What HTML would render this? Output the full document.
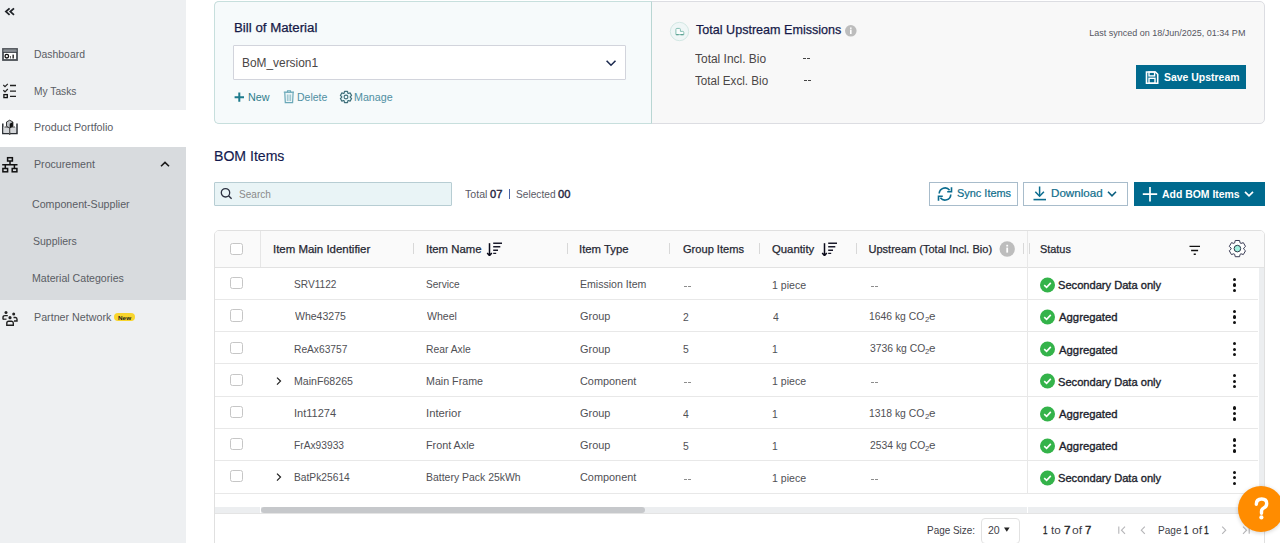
<!DOCTYPE html>
<html><head><meta charset="utf-8"><style>
html,body{margin:0;padding:0;width:1280px;height:543px;overflow:hidden;background:#fff;font-family:"Liberation Sans",sans-serif}
.t{position:absolute;white-space:nowrap;transform-origin:0 0}
.b{position:absolute;display:block}
</style></head><body>
<div class="b" style="left:0px;top:0px;width:186px;height:543px;background:#eef0f2"></div>
<div class="b" style="left:0px;top:110px;width:186px;height:37px;background:#ffffff"></div>
<div class="b" style="left:0px;top:147px;width:186px;height:153px;background:#d8dbde"></div>
<svg class="b" style="left:3px;top:5px;" width="14" height="13" viewBox="0 0 14 13"><path d="M6.6 3.3 L2.9 6.6 L6.6 9.9 M11 3.3 L7.3 6.6 L11 9.9" fill="none" stroke="#1f2328" stroke-width="1.8"/></svg>
<div class="t" style="left:34.17px;top:48.72px;font-size:11.5px;line-height:11.5px;color:#5a5d64;transform:scaleX(0.9062);">Dashboard</div>
<div class="t" style="left:34.18px;top:85.52px;font-size:11.5px;line-height:11.5px;color:#5a5d64;transform:scaleX(0.8900);">My Tasks</div>
<div class="t" style="left:34.14px;top:122.02px;font-size:11.5px;line-height:11.5px;color:#5a5d64;transform:scaleX(0.9330);">Product Portfolio</div>
<div class="t" style="left:33.85px;top:159.12px;font-size:11.5px;line-height:11.5px;color:#5a5d64;transform:scaleX(0.9251);">Procurement</div>
<div class="t" style="left:32.47px;top:199.32px;font-size:11.5px;line-height:11.5px;color:#5a5d64;transform:scaleX(0.9259);">Component-Supplier</div>
<div class="t" style="left:32.53px;top:236.32px;font-size:11.5px;line-height:11.5px;color:#5a5d64;transform:scaleX(0.9142);">Suppliers</div>
<div class="t" style="left:32.15px;top:273.12px;font-size:11.5px;line-height:11.5px;color:#5a5d64;transform:scaleX(0.9209);">Material Categories</div>
<div class="t" style="left:33.64px;top:312.22px;font-size:11.5px;line-height:11.5px;color:#5a5d64;transform:scaleX(0.9316);">Partner Network</div>
<div class="b" style="left:114px;top:313px;width:21px;height:8.2px;background:#f8d52d;border-radius:4.1px"></div>
<div class="t" style="left:117.79px;top:314.77px;font-size:6px;line-height:6px;font-weight:bold;color:#1a1a1a;transform:scaleX(1.0610);">New</div>
<svg class="b" style="left:0px;top:46px;" width="20" height="16" viewBox="0 0 20 16"><rect x="3" y="3" width="14" height="11" fill="#fff" stroke="#4a4f55" stroke-width="1.8"/><rect x="3.5" y="3.5" width="13" height="2.5" fill="#8a8f95"/><line x1="3" y1="6.4" x2="17" y2="6.4" stroke="#3a3f45" stroke-width="1"/><circle cx="6.8" cy="10.2" r="1.8" fill="none" stroke="#111" stroke-width="1.3"/><rect x="10" y="10" width="1" height="2.5" fill="#666"/><rect x="12.5" y="8.6" width="1.3" height="3.9" fill="#111"/></svg>
<svg class="b" style="left:0px;top:80px;" width="20" height="20" viewBox="0 0 20 20"><path d="M3.3 5 L5 6.6 L7.8 3.8 M3.3 10.2 L5 11.8 L7.8 9" fill="none" stroke="#222" stroke-width="1.2"/><rect x="3.9" y="14.6" width="3.4" height="3" fill="none" stroke="#111" stroke-width="1.3"/><path d="M10 5.5 H16 M10 11.2 H16 M10 16.4 H16" stroke="#222" stroke-width="1.3"/></svg>
<svg class="b" style="left:0px;top:118px;" width="20" height="18" viewBox="0 0 20 18"><path d="M2.8 5.5 V15.5 H17 V5.5" fill="none" stroke="#2a2e33" stroke-width="1.5"/><rect x="3.5" y="9" width="5.5" height="6" fill="#d4d6d9"/><rect x="10.5" y="9" width="5.5" height="6" fill="#d4d6d9"/><path d="M4.5 9 H8 M11.5 9 H15" stroke="#444" stroke-width="1"/><path d="M9.7 9.5 V17" stroke="#555" stroke-width="1.3"/><path d="M6.5 4 L9.7 2.2 L12.9 4 V8.3 L9.7 10 L6.5 8.3 Z" fill="#bfc3c7" stroke="#333" stroke-width="1"/><path d="M9.7 5.8 L12.9 4 V8.3 L9.7 10 Z" fill="#111"/></svg>
<svg class="b" style="left:0px;top:155px;" width="20" height="20" viewBox="0 0 20 20"><rect x="7.6" y="2.7" width="4.8" height="3.3" fill="none" stroke="#111" stroke-width="1.5"/><path d="M10 6 V9.7 M2.2 9.7 H17.5 M5.3 9.7 V13.3 M14.4 9.7 V13.3" stroke="#111" stroke-width="1.5"/><rect x="2.9" y="13.5" width="4.7" height="3.3" fill="none" stroke="#111" stroke-width="1.5"/><rect x="12.2" y="13.5" width="4.7" height="3.3" fill="none" stroke="#111" stroke-width="1.5"/></svg>
<svg class="b" style="left:158px;top:159px;" width="14" height="10" viewBox="0 0 14 10"><path d="M3 7.3 L7 3.4 L11 7.3" fill="none" stroke="#1a1a1a" stroke-width="1.6"/></svg>
<svg class="b" style="left:0px;top:308px;" width="20" height="20" viewBox="0 0 20 20"><circle cx="6" cy="4.4" r="1.5" fill="#222"/><path d="M3 11.5 V9.5 Q3 7.6 5 7.6 H7.8" fill="none" stroke="#222" stroke-width="1.4"/><path d="M3 11.2 H6.5" stroke="#222" stroke-width="1.2"/><circle cx="13.7" cy="6" r="1.5" fill="#222"/><path d="M13.5 9.5 H15.5 Q17 9.5 17 11.3 V13 H14" fill="none" stroke="#222" stroke-width="1.4"/><circle cx="10" cy="9.7" r="1.6" fill="#222"/><path d="M6.8 17.2 V15 Q6.8 13.2 8.6 13.2 H11.6 Q13.3 13.2 13.3 15 V17.2 Z" fill="none" stroke="#222" stroke-width="1.4"/></svg>
<div class="b" style="left:214px;top:1px;width:1051px;height:123px;box-sizing:border-box;border:1px solid #dcdde2;border-radius:5px;background:#f8f8f8"></div>
<div class="b" style="left:214px;top:1px;width:438px;height:123px;box-sizing:border-box;border:1px solid #c7dfdd;border-right:1px solid #b9d6d3;border-radius:5px 0 0 5px;background:#f6fafb"></div>
<div class="t" style="left:233.54px;top:21.77px;font-size:12.5px;line-height:12.5px;color:#161a48;transform:scaleX(1.0619);-webkit-text-stroke:0.25px #161a48;">Bill of Material</div>
<div class="b" style="left:233px;top:45px;width:393px;height:34.5px;box-sizing:border-box;border:1px solid #d2d4dc;background:#fff;border-radius:1px"></div>
<div class="t" style="left:241.65px;top:56.99px;font-size:12px;line-height:12px;color:#4a4646;transform:scaleX(0.9910);">BoM_version1</div>
<svg class="b" style="left:603px;top:57px;" width="16" height="12" viewBox="0 0 16 12"><path d="M3.6 3.8 L8 8.2 L12.5 3.8" fill="none" stroke="#1c2a4f" stroke-width="1.6"/></svg>
<svg class="b" style="left:232px;top:90px;" width="14" height="14" viewBox="0 0 14 14"><path d="M7.3 2.5 V11.8 M2.6 7.2 H12" stroke="#1d7a8c" stroke-width="2"/></svg>
<div class="t" style="left:248.14px;top:92.16px;font-size:10.5px;line-height:10.5px;color:#2e7d8c;transform:scaleX(1.0241);">New</div>
<svg class="b" style="left:281px;top:88px;" width="14" height="17" viewBox="0 0 14 17"><path d="M2.8 4.2 H13" stroke="#6aa8b8" stroke-width="1.4"/><path d="M6.5 4 V2.8 H9.5 V4" fill="none" stroke="#6aa8b8" stroke-width="1.1"/><path d="M3.8 5 L4.3 14.6 H11.6 L12.1 5" fill="#eef6f8" stroke="#6aa8b8" stroke-width="1.2"/><path d="M6.4 6.5 V13 M8 6.5 V13 M9.6 6.5 V13" stroke="#8dbdc8" stroke-width="0.9"/></svg>
<div class="t" style="left:296.96px;top:92.16px;font-size:10.5px;line-height:10.5px;color:#4f8fa2;">Delete</div>
<svg class="b" style="left:338px;top:89px;" width="16" height="16" viewBox="0 0 16 16"><path d="M6.15 4.12 L6.50 2.40 L9.50 2.40 L9.85 4.12 L10.44 4.46 L12.10 3.90 L13.60 6.50 L12.29 7.66 L12.29 8.34 L13.60 9.50 L12.10 12.10 L10.44 11.54 L9.85 11.88 L9.50 13.60 L6.50 13.60 L6.15 11.88 L5.56 11.54 L3.90 12.10 L2.40 9.50 L3.71 8.34 L3.71 7.66 L2.40 6.50 L3.90 3.90 L5.56 4.46 Z" fill="#e6f6f8" stroke="#3f6f7a" stroke-width="1.2" stroke-linejoin="round"/><circle cx="8" cy="8" r="1.9" fill="#f6fafb" stroke="#3f6f7a" stroke-width="1.1"/></svg>
<div class="t" style="left:354.14px;top:92.16px;font-size:10.5px;line-height:10.5px;color:#4f8fa2;transform:scaleX(1.0191);">Manage</div>
<svg class="b" style="left:669px;top:21px;" width="21" height="21" viewBox="0 0 21 21"><circle cx="10.5" cy="10.5" r="9.2" fill="#eff6f6" stroke="#d3e8e4" stroke-width="1"/><path d="M7.9 7.4 H10.4 Q11.4 7.4 11.4 8.4 V10.4 H13.8 Q14.8 10.4 14.8 11.4 V13.6 H6.9 V8.4 Q6.9 7.4 7.9 7.4 Z" fill="#fbfdfd" stroke="#86bfb3" stroke-width="1"/><path d="M7.2 13.7 H9.6 M11.6 13.7 H14.5" stroke="#5fa395" stroke-width="1.3"/></svg>
<div class="t" style="left:695.55px;top:23.51px;font-size:12.8px;line-height:12.8px;color:#161a48;transform:scaleX(0.9826);-webkit-text-stroke:0.25px #161a48;">Total Upstream Emissions</div>
<svg class="b" style="left:843px;top:23px;" width="16" height="16" viewBox="0 0 16 16"><circle cx="7.8" cy="7.8" r="5.8" fill="#bdbdbd"/><rect x="7" y="6.6" width="1.6" height="4.4" fill="#fff"/><rect x="7" y="4.5" width="1.6" height="1.4" fill="#fff"/></svg>
<div class="t" style="left:695.36px;top:52.97px;font-size:12.5px;line-height:12.5px;color:#4a4646;transform:scaleX(0.9570);">Total Incl. Bio</div>
<div class="t" style="left:695.37px;top:74.77px;font-size:12.5px;line-height:12.5px;color:#4a4646;transform:scaleX(0.9312);">Total Excl. Bio</div>
<div class="b" style="left:802.6px;top:58.2px;width:3.6px;height:1.2px;background:#444"></div>
<div class="b" style="left:806.8px;top:58.2px;width:3.6px;height:1.2px;background:#444"></div>
<div class="b" style="left:803.7px;top:79.8px;width:3.4px;height:1.2px;background:#444"></div>
<div class="b" style="left:807.6px;top:79.8px;width:3.4px;height:1.2px;background:#444"></div>
<div class="t" style="left:1089.28px;top:29.23px;font-size:9px;line-height:9px;color:#55555f;">Last synced on 18/Jun/2025, 01:34 PM</div>
<div class="b" style="left:1136px;top:65px;width:110px;height:24px;background:#006a8e"></div>
<svg class="b" style="left:1144px;top:70px;" width="16" height="16" viewBox="0 0 16 16"><path d="M2.5 2 H11.4 L13.7 4.3 V13.2 H2.5 Z" fill="none" stroke="#fff" stroke-width="1.6"/><rect x="5" y="2" width="5.6" height="3.9" fill="none" stroke="#fff" stroke-width="1.4"/><rect x="5" y="8.3" width="6" height="4.9" fill="none" stroke="#fff" stroke-width="1.4"/></svg>
<div class="t" style="left:1163.74px;top:72.22px;font-size:11.5px;line-height:11.5px;font-weight:bold;color:#ffffff;transform:scaleX(0.9085);">Save Upstream</div>
<div class="t" style="left:214.47px;top:149.35px;font-size:14.3px;line-height:14.3px;color:#141a4e;transform:scaleX(0.9849);-webkit-text-stroke:0.15px #141a4e;">BOM Items</div>
<div class="b" style="left:214px;top:182px;width:238px;height:24px;box-sizing:border-box;border:1px solid #b7cdd3;background:#e9f4f6;border-radius:1px"></div>
<svg class="b" style="left:218px;top:185px;" width="16" height="16" viewBox="0 0 16 16"><circle cx="7.5" cy="7.8" r="4.2" fill="none" stroke="#2c3040" stroke-width="1.3"/><path d="M10.5 10.8 L13.6 13.8" stroke="#2c3040" stroke-width="1.4"/></svg>
<div class="t" style="left:239.35px;top:189.14px;font-size:11px;line-height:11px;color:#8a8a8a;transform:scaleX(0.9150);">Search</div>
<div class="t" style="left:465.19px;top:188.69px;font-size:11px;line-height:11px;color:#5a5a66;transform:scaleX(0.9628);">Total</div>
<div class="t" style="left:490.01px;top:188.69px;font-size:11px;line-height:11px;color:#1f2440;transform:scaleX(1.0150);-webkit-text-stroke:0.4px #1f2440;">07</div>
<div class="b" style="left:509px;top:189px;width:1px;height:10px;background:#4a64a8"></div>
<div class="t" style="left:516.04px;top:188.69px;font-size:11px;line-height:11px;color:#5a5a66;transform:scaleX(0.9247);">Selected</div>
<div class="t" style="left:558.41px;top:188.69px;font-size:11px;line-height:11px;color:#1f2440;transform:scaleX(1.0140);-webkit-text-stroke:0.4px #1f2440;">00</div>
<div class="b" style="left:929px;top:181.5px;width:89px;height:24.5px;box-sizing:border-box;border:1px solid #a8bccb;background:#fff"></div>
<svg class="b" style="left:935px;top:184px;" width="20" height="20" viewBox="0 0 20 20"><path d="M4.2 9.5 A5.8 5.8 0 0 1 14.6 6.2" fill="none" stroke="#0b6c8f" stroke-width="1.6"/><path d="M16.5 3.2 V7.7 H12.2" fill="none" stroke="#0b6c8f" stroke-width="1.6"/><path d="M15.8 10.5 A5.8 5.8 0 0 1 5.4 13.8" fill="none" stroke="#0b6c8f" stroke-width="1.6"/><path d="M3.5 16.8 V12.3 H7.8" fill="none" stroke="#0b6c8f" stroke-width="1.6"/></svg>
<div class="t" style="left:956.51px;top:188.34px;font-size:11px;line-height:11px;color:#0f6e8c;transform:scaleX(0.9941);-webkit-text-stroke:0.2px #0f6e8c;">Sync Items</div>
<div class="b" style="left:1023px;top:181.5px;width:105px;height:24.5px;box-sizing:border-box;border:1px solid #a8bccb;background:#fff"></div>
<svg class="b" style="left:1030px;top:183px;" width="20" height="20" viewBox="0 0 20 20"><path d="M9.6 3.5 V13" stroke="#0b6c8f" stroke-width="1.5"/><path d="M5.3 8.8 L9.6 13.2 L13.9 8.8" fill="none" stroke="#0b6c8f" stroke-width="1.5"/><path d="M3.5 16.6 H16" stroke="#0b6c8f" stroke-width="1.6"/></svg>
<div class="t" style="left:1051.37px;top:188.34px;font-size:11px;line-height:11px;color:#0f6e8c;transform:scaleX(1.0559);-webkit-text-stroke:0.2px #0f6e8c;">Download</div>
<svg class="b" style="left:1105px;top:188px;" width="14" height="12" viewBox="0 0 14 12"><path d="M3 3.8 L7 7.8 L11 3.8" fill="none" stroke="#0b5f80" stroke-width="1.6"/></svg>
<div class="b" style="left:1134px;top:182px;width:131px;height:24px;background:#006a8e"></div>
<svg class="b" style="left:1140px;top:185px;" width="20" height="20" viewBox="0 0 20 20"><path d="M10 2 V16.5 M2.8 9.2 H17.2" stroke="#fff" stroke-width="1.7"/></svg>
<div class="t" style="left:1162.24px;top:188.84px;font-size:11px;line-height:11px;font-weight:bold;color:#ffffff;transform:scaleX(0.9479);">Add BOM Items</div>
<svg class="b" style="left:1242px;top:188px;" width="14" height="12" viewBox="0 0 14 12"><path d="M3 3.8 L7 7.8 L11 3.8" fill="none" stroke="#fff" stroke-width="1.7"/></svg>
<div class="b" style="left:214px;top:230px;width:1051px;height:330px;box-sizing:border-box;border:1px solid #e0e0e0;border-radius:5px;background:#fff"></div>
<div class="b" style="left:215px;top:231px;width:1049px;height:36.5px;background:#fafafa;border-radius:4px 4px 0 0"></div>
<div class="b" style="left:215px;top:267px;width:1049px;height:1px;background:#e2e2e2"></div>
<div class="b" style="left:260px;top:231px;width:1px;height:36px;background:#e6e6e6"></div>
<div class="b" style="left:1027px;top:231px;width:1px;height:262px;background:#e8e8e8"></div>
<div class="b" style="left:413px;top:243px;width:1px;height:11px;background:#d8d8d8"></div>
<div class="b" style="left:567px;top:243px;width:1px;height:11px;background:#d8d8d8"></div>
<div class="b" style="left:669px;top:243px;width:1px;height:11px;background:#d8d8d8"></div>
<div class="b" style="left:759px;top:243px;width:1px;height:11px;background:#d8d8d8"></div>
<div class="b" style="left:856px;top:243px;width:1px;height:11px;background:#d8d8d8"></div>
<div class="b" style="left:1023px;top:243px;width:1px;height:11px;background:#d8d8d8"></div>
<div class="b" style="left:1029px;top:243px;width:1px;height:11px;background:#d8d8d8"></div>
<div class="b" style="left:230px;top:243.1px;width:12.6px;height:12.2px;box-sizing:border-box;border:1px solid #c6c6c6;border-radius:2.5px;background:#fff"></div>
<div class="t" style="left:272.57px;top:244.44px;font-size:11px;line-height:11px;color:#262833;transform:scaleX(1.0400);-webkit-text-stroke:0.25px #262833;">Item Main Identifier</div>
<div class="t" style="left:425.98px;top:244.44px;font-size:11px;line-height:11px;color:#262833;transform:scaleX(1.0313);-webkit-text-stroke:0.25px #262833;">Item Name</div>
<div class="t" style="left:579.48px;top:244.44px;font-size:11px;line-height:11px;color:#262833;transform:scaleX(1.0292);-webkit-text-stroke:0.25px #262833;">Item Type</div>
<div class="t" style="left:682.85px;top:244.44px;font-size:11px;line-height:11px;color:#262833;transform:scaleX(1.0073);-webkit-text-stroke:0.25px #262833;">Group Items</div>
<div class="t" style="left:772.49px;top:244.44px;font-size:11px;line-height:11px;color:#262833;transform:scaleX(1.0301);-webkit-text-stroke:0.25px #262833;">Quantity</div>
<div class="t" style="left:868.57px;top:244.44px;font-size:11px;line-height:11px;color:#262833;-webkit-text-stroke:0.25px #262833;">Upstream (Total Incl. Bio)</div>
<div class="t" style="left:1040.01px;top:244.44px;font-size:11px;line-height:11px;color:#262833;transform:scaleX(0.9899);-webkit-text-stroke:0.25px #262833;">Status</div>
<svg class="b" style="left:486px;top:242px;" width="16" height="14" viewBox="0 0 16 14"><path d="M3.5 1.2 V13.2" stroke="#0a0a1a" stroke-width="1.5"/><path d="M1.2 11 L3.5 13.6 L5.8 11" fill="none" stroke="#0a0a1a" stroke-width="1.5"/><path d="M7.2 1.3 H16.1 M7.2 4.7 H14.3 M7.2 8.2 H12 M7.2 11.4 H10.2" stroke="#1a1a2a" stroke-width="1.4"/></svg>
<svg class="b" style="left:820.5px;top:242px;" width="16" height="14" viewBox="0 0 16 14"><path d="M3.5 1.2 V13.2" stroke="#0a0a1a" stroke-width="1.5"/><path d="M1.2 11 L3.5 13.6 L5.8 11" fill="none" stroke="#0a0a1a" stroke-width="1.5"/><path d="M7.2 1.3 H16.1 M7.2 4.7 H14.3 M7.2 8.2 H12 M7.2 11.4 H10.2" stroke="#1a1a2a" stroke-width="1.4"/></svg>
<svg class="b" style="left:999px;top:240.6px;" width="17" height="17" viewBox="0 0 17 17"><circle cx="8.2" cy="8" r="7.7" fill="#bdbdbd"/><rect x="7.3" y="6.6" width="1.8" height="5" fill="#fff"/><rect x="7.3" y="3.8" width="1.8" height="1.7" fill="#fff"/></svg>
<svg class="b" style="left:1187px;top:243px;" width="16" height="14" viewBox="0 0 16 14"><path d="M2.5 3.4 H13 M4.1 7.5 H11.1 M6.7 11.3 H8.8" stroke="#111" stroke-width="1.4"/></svg>
<svg class="b" style="left:1227px;top:238px;" width="22" height="22" viewBox="0 0 22 22"><path d="M7.69 4.91 L8.23 2.49 L12.57 2.49 L13.11 4.91 L13.97 5.41 L16.34 4.66 L18.51 8.43 L16.68 10.11 L16.68 11.09 L18.51 12.77 L16.34 16.54 L13.97 15.79 L13.11 16.29 L12.57 18.71 L8.23 18.71 L7.69 16.29 L6.83 15.79 L4.46 16.54 L2.29 12.77 L4.12 11.09 L4.12 10.11 L2.29 8.43 L4.46 4.66 L6.83 5.41 Z" fill="#fff" stroke="#3a3c55" stroke-width="1" stroke-linejoin="round"/><circle cx="10.4" cy="10.6" r="3.3" fill="#a3f0df" stroke="#2f3a4a" stroke-width="1"/></svg>
<div class="b" style="left:230px;top:277.2px;width:12.6px;height:12.2px;box-sizing:border-box;border:1px solid #c6c6c6;border-radius:2.5px;background:#fff"></div>
<div class="t" style="left:294.34px;top:279.32px;font-size:11.5px;line-height:11.5px;color:#505055;transform:scaleX(0.8802);">SRV1122</div>
<div class="t" style="left:426.45px;top:279.32px;font-size:11.5px;line-height:11.5px;color:#505055;transform:scaleX(0.8776);">Service</div>
<div class="t" style="left:579.66px;top:279.32px;font-size:11.5px;line-height:11.5px;color:#505055;transform:scaleX(0.9185);">Emission Item</div>
<div class="b" style="left:683.5px;top:285.9px;width:3.3px;height:1.1px;background:#8d8d8d"></div>
<div class="b" style="left:688px;top:285.9px;width:3.4px;height:1.1px;background:#8d8d8d"></div>
<div class="t" style="left:772.01px;top:279.92px;font-size:11.5px;line-height:11.5px;color:#505055;transform:scaleX(0.9199);">1 piece</div>
<div class="b" style="left:870.5px;top:285.9px;width:3.3px;height:1.1px;background:#8d8d8d"></div>
<div class="b" style="left:875px;top:285.9px;width:3.4px;height:1.1px;background:#8d8d8d"></div>
<svg class="b" style="left:1039px;top:277.0px;" width="17" height="17" viewBox="0 0 17 17"><circle cx="8.5" cy="8" r="7.5" fill="#34b34a"/><path d="M5.2 8.2 L7.6 10.4 L11.8 5.9" fill="none" stroke="#fff" stroke-width="1.6"/></svg>
<div class="t" style="left:1058.20px;top:280.24px;font-size:11px;line-height:11px;color:#1d1f2e;transform:scaleX(1.0094);-webkit-text-stroke:0.35px #1d1f2e;">Secondary Data only</div>
<div class="b" style="left:1233px;top:277.6px;width:3.4px;height:3.4px;background:#111;border-radius:50%"></div>
<div class="b" style="left:1233px;top:283.2px;width:3.4px;height:3.4px;background:#111;border-radius:50%"></div>
<div class="b" style="left:1233px;top:288.7px;width:3.4px;height:3.4px;background:#111;border-radius:50%"></div>
<div class="b" style="left:215px;top:299.1px;width:1043px;height:1px;background:#e8e8e8"></div>
<div class="b" style="left:230px;top:309.34999999999997px;width:12.6px;height:12.2px;box-sizing:border-box;border:1px solid #c6c6c6;border-radius:2.5px;background:#fff"></div>
<div class="t" style="left:294.80px;top:311.47px;font-size:11.5px;line-height:11.5px;color:#505055;transform:scaleX(0.9140);">Whe43275</div>
<div class="t" style="left:426.90px;top:311.47px;font-size:11.5px;line-height:11.5px;color:#505055;transform:scaleX(0.9167);">Wheel</div>
<div class="t" style="left:579.95px;top:311.47px;font-size:11.5px;line-height:11.5px;color:#505055;transform:scaleX(0.9504);">Group</div>
<div class="t" style="left:682.58px;top:312.07px;font-size:11.5px;line-height:11.5px;color:#505055;transform:scaleX(0.9000);">2</div>
<div class="t" style="left:772.59px;top:312.07px;font-size:11.5px;line-height:11.5px;color:#505055;transform:scaleX(0.9000);">4</div>
<div class="t" style="left:869.42px;top:311.07px;font-size:11.5px;line-height:11.5px;color:#505055;transform:scaleX(0.9000);">1646 kg CO</div>
<div class="t" style="left:924.58px;top:316.07px;font-size:7px;line-height:7px;color:#505055;transform:scaleX(1.1180);">2</div>
<div class="t" style="left:928.71px;top:311.07px;font-size:11.5px;line-height:11.5px;color:#505055;transform:scaleX(1.0069);">e</div>
<svg class="b" style="left:1039px;top:309.15px;" width="17" height="17" viewBox="0 0 17 17"><circle cx="8.5" cy="8" r="7.5" fill="#34b34a"/><path d="M5.2 8.2 L7.6 10.4 L11.8 5.9" fill="none" stroke="#fff" stroke-width="1.6"/></svg>
<div class="t" style="left:1058.70px;top:312.39px;font-size:11px;line-height:11px;color:#1d1f2e;transform:scaleX(1.0283);-webkit-text-stroke:0.35px #1d1f2e;">Aggregated</div>
<div class="b" style="left:1233px;top:309.8px;width:3.4px;height:3.4px;background:#111;border-radius:50%"></div>
<div class="b" style="left:1233px;top:315.3px;width:3.4px;height:3.4px;background:#111;border-radius:50%"></div>
<div class="b" style="left:1233px;top:320.8px;width:3.4px;height:3.4px;background:#111;border-radius:50%"></div>
<div class="b" style="left:215px;top:331.3px;width:1043px;height:1px;background:#e8e8e8"></div>
<div class="b" style="left:230px;top:341.5px;width:12.6px;height:12.2px;box-sizing:border-box;border:1px solid #c6c6c6;border-radius:2.5px;background:#fff"></div>
<div class="t" style="left:293.98px;top:343.62px;font-size:11.5px;line-height:11.5px;color:#505055;transform:scaleX(0.8883);">ReAx63757</div>
<div class="t" style="left:426.07px;top:343.62px;font-size:11.5px;line-height:11.5px;color:#505055;transform:scaleX(0.8995);">Rear Axle</div>
<div class="t" style="left:579.95px;top:343.62px;font-size:11.5px;line-height:11.5px;color:#505055;transform:scaleX(0.9504);">Group</div>
<div class="t" style="left:682.69px;top:344.22px;font-size:11.5px;line-height:11.5px;color:#505055;transform:scaleX(0.9000);">5</div>
<div class="t" style="left:772.02px;top:344.22px;font-size:11.5px;line-height:11.5px;color:#505055;transform:scaleX(0.9000);">1</div>
<div class="t" style="left:869.84px;top:343.22px;font-size:11.5px;line-height:11.5px;color:#505055;transform:scaleX(0.9000);">3736 kg CO</div>
<div class="t" style="left:925.00px;top:348.22px;font-size:7px;line-height:7px;color:#505055;transform:scaleX(1.1180);">2</div>
<div class="t" style="left:929.13px;top:343.22px;font-size:11.5px;line-height:11.5px;color:#505055;transform:scaleX(1.0069);">e</div>
<svg class="b" style="left:1039px;top:341.3px;" width="17" height="17" viewBox="0 0 17 17"><circle cx="8.5" cy="8" r="7.5" fill="#34b34a"/><path d="M5.2 8.2 L7.6 10.4 L11.8 5.9" fill="none" stroke="#fff" stroke-width="1.6"/></svg>
<div class="t" style="left:1058.70px;top:344.54px;font-size:11px;line-height:11px;color:#1d1f2e;transform:scaleX(1.0283);-webkit-text-stroke:0.35px #1d1f2e;">Aggregated</div>
<div class="b" style="left:1233px;top:341.9px;width:3.4px;height:3.4px;background:#111;border-radius:50%"></div>
<div class="b" style="left:1233px;top:347.5px;width:3.4px;height:3.4px;background:#111;border-radius:50%"></div>
<div class="b" style="left:1233px;top:353.0px;width:3.4px;height:3.4px;background:#111;border-radius:50%"></div>
<div class="b" style="left:215px;top:363.4px;width:1043px;height:1px;background:#e8e8e8"></div>
<div class="b" style="left:230px;top:373.65px;width:12.6px;height:12.2px;box-sizing:border-box;border:1px solid #c6c6c6;border-radius:2.5px;background:#fff"></div>
<svg class="b" style="left:272px;top:373.95px;" width="12" height="14" viewBox="0 0 12 14"><path d="M5 3.6 L8.5 7.1 L5 10.6" fill="none" stroke="#222" stroke-width="1.25"/></svg>
<div class="t" style="left:293.95px;top:375.77px;font-size:11.5px;line-height:11.5px;color:#505055;transform:scaleX(0.9223);">MainF68265</div>
<div class="t" style="left:426.05px;top:375.77px;font-size:11.5px;line-height:11.5px;color:#505055;transform:scaleX(0.9288);">Main Frame</div>
<div class="t" style="left:579.96px;top:375.77px;font-size:11.5px;line-height:11.5px;color:#505055;transform:scaleX(0.9469);">Component</div>
<div class="b" style="left:683.5px;top:382.34999999999997px;width:3.3px;height:1.1px;background:#8d8d8d"></div>
<div class="b" style="left:688px;top:382.34999999999997px;width:3.4px;height:1.1px;background:#8d8d8d"></div>
<div class="t" style="left:772.01px;top:376.37px;font-size:11.5px;line-height:11.5px;color:#505055;transform:scaleX(0.9199);">1 piece</div>
<div class="b" style="left:870.5px;top:382.34999999999997px;width:3.3px;height:1.1px;background:#8d8d8d"></div>
<div class="b" style="left:875px;top:382.34999999999997px;width:3.4px;height:1.1px;background:#8d8d8d"></div>
<svg class="b" style="left:1039px;top:373.45px;" width="17" height="17" viewBox="0 0 17 17"><circle cx="8.5" cy="8" r="7.5" fill="#34b34a"/><path d="M5.2 8.2 L7.6 10.4 L11.8 5.9" fill="none" stroke="#fff" stroke-width="1.6"/></svg>
<div class="t" style="left:1058.20px;top:376.69px;font-size:11px;line-height:11px;color:#1d1f2e;transform:scaleX(1.0094);-webkit-text-stroke:0.35px #1d1f2e;">Secondary Data only</div>
<div class="b" style="left:1233px;top:374.1px;width:3.4px;height:3.4px;background:#111;border-radius:50%"></div>
<div class="b" style="left:1233px;top:379.6px;width:3.4px;height:3.4px;background:#111;border-radius:50%"></div>
<div class="b" style="left:1233px;top:385.1px;width:3.4px;height:3.4px;background:#111;border-radius:50%"></div>
<div class="b" style="left:215px;top:395.6px;width:1043px;height:1px;background:#e8e8e8"></div>
<div class="b" style="left:230px;top:405.8px;width:12.6px;height:12.2px;box-sizing:border-box;border:1px solid #c6c6c6;border-radius:2.5px;background:#fff"></div>
<div class="t" style="left:293.81px;top:407.92px;font-size:11.5px;line-height:11.5px;color:#505055;transform:scaleX(0.9589);">Int11274</div>
<div class="t" style="left:425.88px;top:407.92px;font-size:11.5px;line-height:11.5px;color:#505055;transform:scaleX(0.9822);">Interior</div>
<div class="t" style="left:579.95px;top:407.92px;font-size:11.5px;line-height:11.5px;color:#505055;transform:scaleX(0.9504);">Group</div>
<div class="t" style="left:682.89px;top:408.52px;font-size:11.5px;line-height:11.5px;color:#505055;transform:scaleX(0.9000);">4</div>
<div class="t" style="left:772.02px;top:408.52px;font-size:11.5px;line-height:11.5px;color:#505055;transform:scaleX(0.9000);">1</div>
<div class="t" style="left:869.42px;top:407.52px;font-size:11.5px;line-height:11.5px;color:#505055;transform:scaleX(0.9000);">1318 kg CO</div>
<div class="t" style="left:924.58px;top:412.52px;font-size:7px;line-height:7px;color:#505055;transform:scaleX(1.1180);">2</div>
<div class="t" style="left:928.71px;top:407.52px;font-size:11.5px;line-height:11.5px;color:#505055;transform:scaleX(1.0069);">e</div>
<svg class="b" style="left:1039px;top:405.6px;" width="17" height="17" viewBox="0 0 17 17"><circle cx="8.5" cy="8" r="7.5" fill="#34b34a"/><path d="M5.2 8.2 L7.6 10.4 L11.8 5.9" fill="none" stroke="#fff" stroke-width="1.6"/></svg>
<div class="t" style="left:1058.70px;top:408.84px;font-size:11px;line-height:11px;color:#1d1f2e;transform:scaleX(1.0283);-webkit-text-stroke:0.35px #1d1f2e;">Aggregated</div>
<div class="b" style="left:1233px;top:406.2px;width:3.4px;height:3.4px;background:#111;border-radius:50%"></div>
<div class="b" style="left:1233px;top:411.8px;width:3.4px;height:3.4px;background:#111;border-radius:50%"></div>
<div class="b" style="left:1233px;top:417.3px;width:3.4px;height:3.4px;background:#111;border-radius:50%"></div>
<div class="b" style="left:215px;top:427.7px;width:1043px;height:1px;background:#e8e8e8"></div>
<div class="b" style="left:230px;top:437.95px;width:12.6px;height:12.2px;box-sizing:border-box;border:1px solid #c6c6c6;border-radius:2.5px;background:#fff"></div>
<div class="t" style="left:293.98px;top:440.07px;font-size:11.5px;line-height:11.5px;color:#505055;transform:scaleX(0.8896);">FrAx93933</div>
<div class="t" style="left:426.04px;top:440.07px;font-size:11.5px;line-height:11.5px;color:#505055;transform:scaleX(0.9391);">Front Axle</div>
<div class="t" style="left:579.95px;top:440.07px;font-size:11.5px;line-height:11.5px;color:#505055;transform:scaleX(0.9504);">Group</div>
<div class="t" style="left:682.69px;top:440.67px;font-size:11.5px;line-height:11.5px;color:#505055;transform:scaleX(0.9000);">5</div>
<div class="t" style="left:772.02px;top:440.67px;font-size:11.5px;line-height:11.5px;color:#505055;transform:scaleX(0.9000);">1</div>
<div class="t" style="left:869.68px;top:439.67px;font-size:11.5px;line-height:11.5px;color:#505055;transform:scaleX(0.9000);">2534 kg CO</div>
<div class="t" style="left:924.84px;top:444.67px;font-size:7px;line-height:7px;color:#505055;transform:scaleX(1.1180);">2</div>
<div class="t" style="left:928.97px;top:439.67px;font-size:11.5px;line-height:11.5px;color:#505055;transform:scaleX(1.0069);">e</div>
<svg class="b" style="left:1039px;top:437.75px;" width="17" height="17" viewBox="0 0 17 17"><circle cx="8.5" cy="8" r="7.5" fill="#34b34a"/><path d="M5.2 8.2 L7.6 10.4 L11.8 5.9" fill="none" stroke="#fff" stroke-width="1.6"/></svg>
<div class="t" style="left:1058.70px;top:440.99px;font-size:11px;line-height:11px;color:#1d1f2e;transform:scaleX(1.0283);-webkit-text-stroke:0.35px #1d1f2e;">Aggregated</div>
<div class="b" style="left:1233px;top:438.4px;width:3.4px;height:3.4px;background:#111;border-radius:50%"></div>
<div class="b" style="left:1233px;top:443.9px;width:3.4px;height:3.4px;background:#111;border-radius:50%"></div>
<div class="b" style="left:1233px;top:449.4px;width:3.4px;height:3.4px;background:#111;border-radius:50%"></div>
<div class="b" style="left:215px;top:459.9px;width:1043px;height:1px;background:#e8e8e8"></div>
<div class="b" style="left:230px;top:470.09999999999997px;width:12.6px;height:12.2px;box-sizing:border-box;border:1px solid #c6c6c6;border-radius:2.5px;background:#fff"></div>
<svg class="b" style="left:272px;top:470.4px;" width="12" height="14" viewBox="0 0 12 14"><path d="M5 3.6 L8.5 7.1 L5 10.6" fill="none" stroke="#222" stroke-width="1.25"/></svg>
<div class="t" style="left:293.98px;top:472.22px;font-size:11.5px;line-height:11.5px;color:#505055;transform:scaleX(0.8899);">BatPk25614</div>
<div class="t" style="left:426.06px;top:472.22px;font-size:11.5px;line-height:11.5px;color:#505055;transform:scaleX(0.9086);">Battery Pack 25kWh</div>
<div class="t" style="left:579.96px;top:472.22px;font-size:11.5px;line-height:11.5px;color:#505055;transform:scaleX(0.9469);">Component</div>
<div class="b" style="left:683.5px;top:478.79999999999995px;width:3.3px;height:1.1px;background:#8d8d8d"></div>
<div class="b" style="left:688px;top:478.79999999999995px;width:3.4px;height:1.1px;background:#8d8d8d"></div>
<div class="t" style="left:772.01px;top:472.82px;font-size:11.5px;line-height:11.5px;color:#505055;transform:scaleX(0.9199);">1 piece</div>
<div class="b" style="left:870.5px;top:478.79999999999995px;width:3.3px;height:1.1px;background:#8d8d8d"></div>
<div class="b" style="left:875px;top:478.79999999999995px;width:3.4px;height:1.1px;background:#8d8d8d"></div>
<svg class="b" style="left:1039px;top:469.9px;" width="17" height="17" viewBox="0 0 17 17"><circle cx="8.5" cy="8" r="7.5" fill="#34b34a"/><path d="M5.2 8.2 L7.6 10.4 L11.8 5.9" fill="none" stroke="#fff" stroke-width="1.6"/></svg>
<div class="t" style="left:1058.20px;top:473.14px;font-size:11px;line-height:11px;color:#1d1f2e;transform:scaleX(1.0094);-webkit-text-stroke:0.35px #1d1f2e;">Secondary Data only</div>
<div class="b" style="left:1233px;top:470.5px;width:3.4px;height:3.4px;background:#111;border-radius:50%"></div>
<div class="b" style="left:1233px;top:476.1px;width:3.4px;height:3.4px;background:#111;border-radius:50%"></div>
<div class="b" style="left:1233px;top:481.6px;width:3.4px;height:3.4px;background:#111;border-radius:50%"></div>
<div class="b" style="left:215px;top:492.6px;width:1043px;height:1px;background:#e8e8e8"></div>
<div class="b" style="left:1258.5px;top:268px;width:5.5px;height:245px;background:#eceef0"></div>
<div class="b" style="left:215px;top:507px;width:1043px;height:6.2px;background:#eceef0"></div>
<div class="b" style="left:260px;top:507px;width:1px;height:6.2px;background:#fff"></div>
<div class="b" style="left:1027px;top:507px;width:1px;height:6.2px;background:#fff"></div>
<div class="b" style="left:261px;top:507px;width:384px;height:6.2px;background:#c6c8cb;border-radius:3px"></div>
<div class="b" style="left:215px;top:513.3px;width:1049px;height:1px;background:#e4e4e4"></div>
<div class="t" style="left:927.41px;top:525.22px;font-size:11.5px;line-height:11.5px;color:#3e3e48;transform:scaleX(0.8640);">Page Size:</div>
<div class="b" style="left:980.8px;top:517.7px;width:39px;height:26px;box-sizing:border-box;border:1px solid #e2e2e2;border-radius:4px;background:#fff"></div>
<div class="t" style="left:987.67px;top:525.22px;font-size:11.5px;line-height:11.5px;color:#3e3e48;transform:scaleX(0.9162);">20</div>
<svg class="b" style="left:1002px;top:525px;" width="10" height="9" viewBox="0 0 10 9"><path d="M2 2.6 H7.6 L4.8 6.8 Z" fill="#222"/></svg>
<div class="t" style="left:1043.40px;top:525.12px;font-size:11.5px;line-height:11.5px;color:#222;transform:scaleX(0.6997);-webkit-text-stroke:0.35px #222;">1</div>
<div class="t" style="left:1051.33px;top:525.12px;font-size:11.5px;line-height:11.5px;color:#3e3e48;transform:scaleX(1.0145);">to</div>
<div class="t" style="left:1063.51px;top:525.12px;font-size:11.5px;line-height:11.5px;color:#222;transform:scaleX(1.0208);-webkit-text-stroke:0.35px #222;">7</div>
<div class="t" style="left:1072.32px;top:525.12px;font-size:11.5px;line-height:11.5px;color:#3e3e48;transform:scaleX(1.0500);">of</div>
<div class="t" style="left:1085.13px;top:525.12px;font-size:11.5px;line-height:11.5px;color:#222;transform:scaleX(0.9830);-webkit-text-stroke:0.35px #222;">7</div>
<svg class="b" style="left:1116px;top:524px;" width="12" height="12" viewBox="0 0 12 12"><path d="M2.8 2.5 V9.8 M9 2.6 L5.5 6.2 L9 9.8" fill="none" stroke="#b5b5b8" stroke-width="1.1"/></svg>
<svg class="b" style="left:1138px;top:524px;" width="10" height="12" viewBox="0 0 10 12"><path d="M6.8 2.6 L3.3 6.2 L6.8 9.8" fill="none" stroke="#b5b5b8" stroke-width="1.1"/></svg>
<div class="t" style="left:1158.19px;top:525.12px;font-size:11.5px;line-height:11.5px;color:#3e3e48;transform:scaleX(0.8755);">Page</div>
<div class="t" style="left:1184.43px;top:525.12px;font-size:11.5px;line-height:11.5px;color:#222;transform:scaleX(0.6597);-webkit-text-stroke:0.35px #222;">1</div>
<div class="t" style="left:1191.52px;top:525.12px;font-size:11.5px;line-height:11.5px;color:#3e3e48;transform:scaleX(1.0500);">of</div>
<div class="t" style="left:1204.06px;top:525.12px;font-size:11.5px;line-height:11.5px;color:#222;transform:scaleX(0.7396);-webkit-text-stroke:0.35px #222;">1</div>
<svg class="b" style="left:1219px;top:524px;" width="10" height="12" viewBox="0 0 10 12"><path d="M3.2 2.6 L6.7 6.2 L3.2 9.8" fill="none" stroke="#b5b5b8" stroke-width="1.1"/></svg>
<svg class="b" style="left:1240px;top:524px;" width="12" height="12" viewBox="0 0 12 12"><path d="M3 2.6 L6.5 6.2 L3 9.8 M9.2 2.5 V9.8" fill="none" stroke="#b5b5b8" stroke-width="1.1"/></svg>
<div class="b" style="left:1238.2px;top:486px;width:46px;height:46px;border-radius:50%;background:#ff8c00;box-shadow:0 1px 4px rgba(0,0,0,0.18)"></div>
<svg class="b" style="left:1240px;top:480px;" width="40" height="50" viewBox="0 0 40 50"><path d="M16.3 24.2 Q16.3 19 21.7 19 Q26.7 19 26.7 23.4 Q26.7 26.6 23.7 28 Q21.5 29.1 21.5 31.5 V33.2" transform="translate(0,0)" fill="none" stroke="#fff" stroke-width="3.4" stroke-linecap="round" stroke-linejoin="round"/><circle cx="21.4" cy="37.4" r="2.1" fill="#fff"/></svg>
</body></html>
